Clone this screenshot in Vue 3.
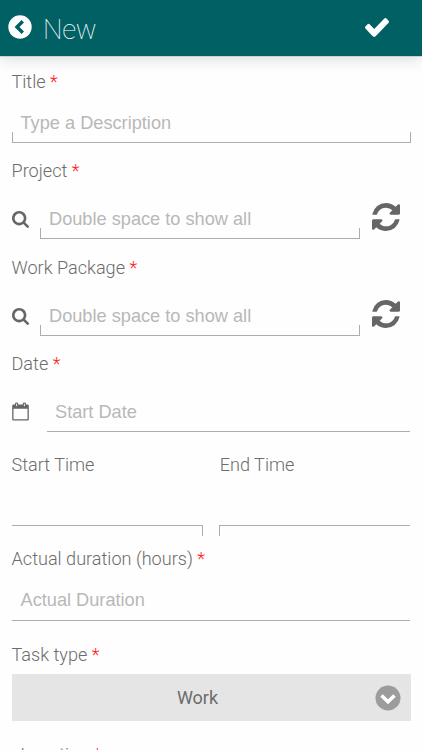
<script setup>
const lookups = ['Project', 'Work Package']
const hint = 'Double space to show all'
</script>

<template>
  <div class="screen">
    <header class="bar">
      <svg class="back" viewBox="0 0 24 24">
        <circle cx="12" cy="12" r="11.7" fill="#fff" />
        <path d="M14.800 6.200 9 12l5.800 5.800" fill="none" stroke="#006064" stroke-width="3.400" />
      </svg>
      <h1>New</h1>
      <svg class="check" viewBox="121 330 1550 1192" preserveAspectRatio="none">
        <path fill="#fff" d="M1671 566q0 40-28 68l-724 724-136 136q-28 28-68 28t-68-28l-136-136-362-362q-28-28-28-68t28-68l136-136q28-28 68-28t68 28l294 295 656-657q28-28 68-28t68 28l136 136q28 28 28 68z" />
      </svg>
    </header>

    <main class="form">
      <div class="label">Title <b>*</b></div>
      <div class="field ticks title"><span class="ph">Type a Description</span></div>

      <section v-for="name in lookups" :key="name" class="lookup">
        <div class="label">{{ name }} <b>*</b></div>
        <div class="row">
          <svg class="search" viewBox="64 128 1664 1664">
            <path d="M1216 832q0-185-131.5-316.5t-316.5-131.5-316.5 131.5-131.5 316.5 131.5 316.5 316.5 131.5 316.5-131.5 131.5-316.5zm512 832q0 52-38 90t-90 38q-54 0-90-38l-343-342q-179 124-399 124-143 0-273.5-55.5t-225-150-150-225-55.5-273.5 55.5-273.5 150-225 225-150 273.5-55.5 273.5 55.5 225 150 150 225 55.5 273.5q0 220-124 399l343 343q37 37 37 90z" />
          </svg>
          <div class="field ticks"><span class="ph">{{ hint }}</span></div>
          <svg class="refresh" viewBox="128 128 1536 1536">
            <path d="M1639 1056q0 5-1 7-64 268-268 434.5t-478 166.5q-146 0-282.5-55t-243.5-157l-129 129q-19 19-45 19t-45-19-19-45v-448q0-26 19-45t45-19h448q26 0 45 19t19 45-19 45l-137 137q71 66 161 102t187 36q134 0 250-65t186-179q11-17 53-117 8-23 30-23h192q13 0 22.5 9.5t9.5 22.5zm25-800v448q0 26-19 45t-45 19h-448q-26 0-45-19t-19-45 19-45l138-138q-148-137-349-137-134 0-250 65t-186 179q-11 17-53 117-8 23-30 23h-199q-13 0-22.5-9.5t-9.5-22.5v-7q65-268 270-434.5t480-166.5q146 0 284 55.5t245 156.5l130-129q19-19 45-19t45 19 19 45z" />
          </svg>
        </div>
      </section>

      <div class="label">Date <b>*</b></div>
      <div class="row date">
        <svg class="calendar" viewBox="0 0 17 19">
          <path fill-rule="evenodd" d="M1.4 2.5h14.2q1.2 0 1.2 1.3v13.4q0 1.3-1.2 1.3H1.4Q.2 18.500.2 17.200V3.800Q.2 2.500 1.400 2.500zM1.500 6.800v10.400h14V6.800z" />
          <rect x="3" y=".4" width="3.2" height="5" rx="1.4" />
          <rect x="10.800" y=".4" width="3.200" height="5" rx="1.400" />
          <path d="M4.600 1.700v2.500M12.400 1.700v2.500" stroke="#fff" stroke-width=".9" />
        </svg>
        <div class="field"><span class="ph">Start Date</span></div>
      </div>

      <div class="times">
        <div class="time start"><div class="label">Start Time</div></div>
        <div class="time end"><div class="label">End Time</div></div>
      </div>

      <div class="label">Actual duration (hours) <b>*</b></div>
      <div class="field duration"><span class="ph">Actual Duration</span></div>

      <div class="label">Task type <b>*</b></div>
      <div class="select">
        <span>Work</span>
        <svg viewBox="0 0 26 26">
          <circle cx="13" cy="13" r="12.500" fill="#9c9c9c" />
          <path d="m6.500 10.500 6.500 6.200 6.500-6.200" fill="none" stroke="#fff" stroke-width="3.600" />
        </svg>
      </div>
      <div class="label location">Location <b>*</b></div>
    </main>
  </div>
</template>

<style>
body { margin: 0; overflow: hidden; background: #fefefe; }
</style>

<style scoped>
.screen {
  width: 422px;
  height: 750px;
  overflow: hidden;
  background: #fefefe;
  font-family: Roboto, sans-serif;
  color: #6c6c6c;
}
.bar {
  display: flex;
  align-items: center;
  box-sizing: border-box;
  height: 56px;
  padding: 0 33px 0 8px;
  background: #006064;
  box-shadow: 0 1px 0 #c4d5d6, 0 3px 14px rgba(0, 0, 0, 0.14);
}
.back { width: 24px; height: 24px; margin-bottom: 2px; }
h1 {
  flex: 1;
  margin: 3px 0 0 11px;
  font-size: 27.500px;
  line-height: 34px;
  font-weight: 100;
  letter-spacing: -0.3px;
  color: #fff;
}
.check { width: 24px; height: 19px; margin-bottom: 1px; }
.form { padding: 14px 12px 0 11.500px; }
.label {
  height: 24px;
  font-size: 18.100px;
  line-height: 24px;
  font-weight: 300;
  white-space: nowrap;
}
.label b { font-weight: 300; color: #ff1c1c; }
.field {
  display: flex;
  align-items: flex-end;
  box-sizing: border-box;
  border-bottom: 1px solid #adadad;
  padding: 0 9px 7px;
}
.ticks {
  background:
    linear-gradient(#adadad, #adadad) left bottom / 1px 10px no-repeat,
    linear-gradient(#adadad, #adadad) right bottom / 1px 10px no-repeat;
}
.ph {
  font-family: "Liberation Sans", Arial, sans-serif;
  font-size: 18.200px;
  line-height: 24px;
  color: #b8b8b8;
  white-space: nowrap;
}
.title { height: 49px; width: 399px; margin-bottom: 16px; }
.row { display: flex; }
.lookup { height: 96.500px; }
.lookup .row { height: 56px; }
.lookup .field { width: 320px; height: 56px; margin-left: 11.500px; }
svg { display: block; flex: none; fill: #666; }
.search { width: 17px; height: 17px; margin-top: 28px; }
.refresh { width: 28px; height: 28px; margin: 20px 0 0 11.500px; }
.date { height: 56px; margin-bottom: 21px; }
.date .field { flex: 1; margin-left: 18.500px; padding-left: 8px; }
.calendar { width: 17px; height: 19px; margin-top: 26px; }
.times { display: flex; gap: 16px; height: 83px; margin-bottom: 11px; }
.time { box-sizing: border-box; height: 83px; width: 191.500px; }
.time .label { height: 72px; border-bottom: 1px solid #adadad; }
.start {
  background: linear-gradient(#adadad, #adadad) right bottom / 1px 10px no-repeat;
}
.end {
  background: linear-gradient(#adadad, #adadad) left bottom / 1px 10px no-repeat;
}
.end .label { padding-left: 1px; }
.duration { height: 50px; margin-bottom: 22px; padding-bottom: 8px; }
.select {
  display: flex;
  align-items: center;
  justify-content: flex-end;
  box-sizing: border-box;
  width: 399px;
  height: 47px;
  margin: 7px 0 22px;
  padding-right: 10px;
  background: #e5e5e5;
}
.select span { flex: 1; padding-left: 9px; text-align: center; font-size: 18px; }
.select svg { width: 26px; height: 26px; }
.location { padding-left: 9px; }
</style>
